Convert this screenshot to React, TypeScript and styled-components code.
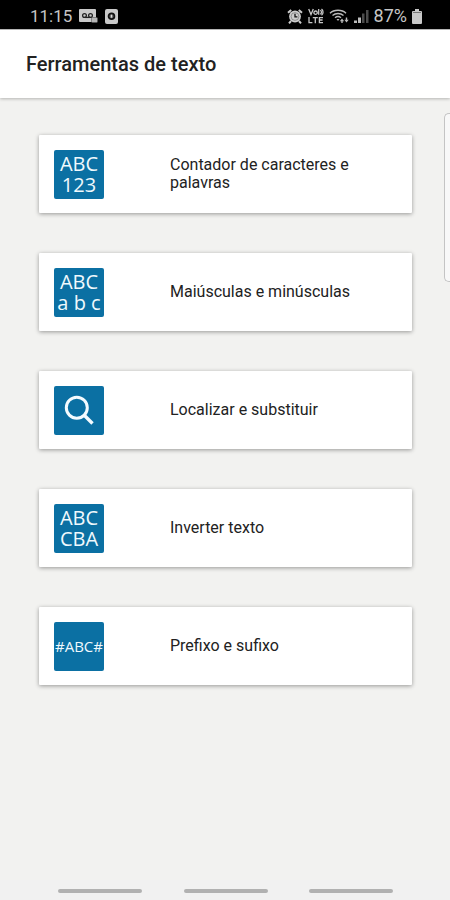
import React from "react";
import styled, { createGlobalStyle } from "styled-components";

const GlobalStyle = createGlobalStyle`
  * { box-sizing: border-box; }
  body {
    margin: 0;
    background: #f2f2f0;
    color: #222;
    font-family: Roboto, "Liberation Sans", sans-serif;
  }
`;

const Screen = styled.div`
  position: relative;
  min-height: 100vh;
  display: flex;
  flex-direction: column;
`;

const StatusBar = styled.div`
  display: flex;
  justify-content: space-between;
  align-items: center;
  height: 29px;
  padding: 3px 28px 0 30px;
  background: #000;
  color: #c6c6c6;
  line-height: 20px;
`;

const StatusGroup = styled.div<{ $gap: number; $size: number }>`
  display: flex;
  align-items: center;
  gap: ${(p) => p.$gap}px;
  font-size: ${(p) => p.$size}px;
  svg { display: block; flex: none; }
`;

const AppBar = styled.header`
  display: flex;
  align-items: center;
  height: 69px;
  padding: 0 26px;
  background: #fff;
  border-top: 1px solid #b5b5b5;
  box-shadow: 0 1px 3px rgba(0, 0, 0, 0.26);
`;

const Title = styled.h1`
  margin: 0;
  font-size: 20px;
  line-height: 24px;
  font-weight: 500;
`;

const ToolList = styled.main`
  flex: 1;
  display: flex;
  flex-direction: column;
  gap: 40px;
  padding: 37px 38px 40px 39px;
`;

const ToolCard = styled.button`
  display: grid;
  grid-template-columns: 50px 1fr;
  column-gap: 66px;
  align-items: center;
  width: 100%;
  min-height: 78px;
  padding: 14px 32px 14px 15px;
  border: 0;
  border-radius: 1px;
  background: #fff;
  box-shadow: 0 1px 4px rgba(0, 0, 0, 0.38);
  color: inherit;
  font: inherit;
  text-align: left;
  cursor: pointer;
`;

const Tile = styled.span<{ $small?: boolean }>`
  display: flex;
  flex-direction: column;
  align-items: center;
  justify-content: center;
  height: 49px;
  border-radius: 2px;
  background: #0b70a3;
  color: #f0f9fd;
  font-family: "Open Sans", "Noto Sans", sans-serif;
  font-size: ${(p) => (p.$small ? 15 : 20)}px;
  font-weight: 500;
  line-height: 21px;
  white-space: nowrap;
`;

const Label = styled.span`
  font-size: 16px;
  line-height: 18px;
`;

const EdgePanel = styled.div`
  position: absolute;
  top: 113px;
  right: 0;
  width: 6px;
  height: 169px;
  border: 1px solid #c4c4c4;
  border-right: 0;
  border-radius: 5px 0 0 5px;
  background: #f8f8f8;
`;

const NavBar = styled.nav`
  display: flex;
  justify-content: space-between;
  align-items: center;
  height: 20px;
  padding: 2px 57px 0 58px;
  background: #f1f1f1;
`;

const NavButton = styled.button`
  width: 84px;
  height: 4px;
  padding: 0;
  border: 0;
  border-radius: 2px;
  background: #b1b1b1;
`;

const VoicemailIcon = () => (
  <svg width="19" height="15" viewBox="0 0 19 15" aria-hidden="true">
    <rect x="0" y="0" width="17" height="13" rx="1" fill="#c9c9c9" />
    <g fill="none" stroke="#222" strokeWidth="1.3">
      <circle cx="5.5" cy="6.5" r="1.9" />
      <circle cx="11.5" cy="6.5" r="1.9" />
      <path d="M5.5 8.4h6" />
    </g>
    <rect x="12.5" y="8.5" width="6" height="5" rx="1" fill="#b5b5b5" stroke="#555" strokeWidth=".6" />
  </svg>
);

const DeviceIcon = () => (
  <svg width="13" height="15" viewBox="0 0 13 15" aria-hidden="true">
    <rect width="13" height="15" rx="2" fill="#c9c9c9" />
    <circle cx="6.5" cy="7.2" r="2.9" fill="#777" stroke="#111" strokeWidth="1.8" />
    <path d="M6.5 5.8v2.8" stroke="#ddd" />
  </svg>
);

const AlarmIcon = () => (
  <svg width="16" height="15" viewBox="0 0 16 15" aria-hidden="true">
    <circle cx="8" cy="7.5" r="5.9" fill="#ccc" />
    <path d="M1 3.8 4.2 1M15 3.8 11.8 1M4 12l-2 2.3M12 12l2 2.3" stroke="#ccc" strokeWidth="2" />
    <circle cx="8" cy="7.5" r="3.9" fill="none" stroke="#777" strokeWidth=".7" />
    <path d="M8 4.8v3h2.4" fill="none" stroke="#111" strokeWidth="1.3" />
  </svg>
);

const VolteIcon = () => (
  <svg width="16" height="16" viewBox="0 0 16 16" aria-hidden="true">
    <g fill="none" stroke="#c6c6c6" strokeWidth="1.3">
      <path d="M.7 1 3 6.5 5.3 1" />
      <circle cx="7.6" cy="4.7" r="1.7" />
      <path d="M10.7 1v5.8M12.3 2.3a2.3 2.3 0 0 1 0 4M13.5 1a4 4 0 0 1 0 6.3" />
      <path d="M1 9v5.6h3.4M4.8 9.6h5M7.3 9.6v5.6M15 9.6h-3.6v5H15M11.4 12h3.2" />
    </g>
  </svg>
);

const WifiIcon = () => (
  <svg width="20" height="15" viewBox="0 0 20 15" aria-hidden="true">
    <g fill="none" stroke="#bbb" strokeWidth="1.4">
      <path d="M1 4.2C5 .2 13 .2 17 4.2" />
      <path d="M3.5 6.5c3-2.7 8-2.7 11 0" />
      <path d="M6 8.7c1.8-1.5 4.2-1.5 6 0" />
    </g>
    <path d="M7.5 10h3L9 12z" fill="#bbb" />
    <path d="M10.8 12.3 13 9.5l2.2 2.8h-1.5V14h-1.4v-1.7zM15.4 10.7h1.4V8.5h1.4v2.2h1.5l-2.2 2.9z" fill="#bbb" />
  </svg>
);

const SignalIcon = () => (
  <svg width="15" height="14" viewBox="0 0 15 14" aria-hidden="true">
    <path d="M0 11.5h3V14H0zM4 8.5h3V14H4z" fill="#bcbcbc" />
    <path d="M8 4.5h2.5V14H8zM12 1h2.5v13H12z" fill="#4c4c4c" />
  </svg>
);

const BatteryIcon = () => (
  <svg width="10" height="15" viewBox="0 0 10 15" aria-hidden="true">
    <path d="M3 0h4v2h2a1 1 0 0 1 1 1v11a1 1 0 0 1-1 1H1a1 1 0 0 1-1-1V3a1 1 0 0 1 1-1h2z" fill="#c9c9c9" />
    <path d="M1 3h8v1H1z" fill="#777" />
  </svg>
);

const SearchIcon = () => (
  <svg width="30" height="30" viewBox="0 0 30 30" aria-hidden="true">
    <circle cx="12.8" cy="12.7" r="10.5" fill="none" stroke="#f4fbff" strokeWidth="3" />
    <path d="m20 20 8.5 8.5" stroke="#f4fbff" strokeWidth="3.4" />
  </svg>
);

const tools: { label: string; lines?: string[]; small?: boolean }[] = [
  { label: "Contador de caracteres e palavras", lines: ["ABC", "123"] },
  { label: "Maiúsculas e minúsculas", lines: ["ABC", "a b c"] },
  { label: "Localizar e substituir" },
  { label: "Inverter texto", lines: ["ABC", "CBA"] },
  { label: "Prefixo e sufixo", lines: ["#ABC#"], small: true },
];

export default function App() {
  return (
    <Screen>
      <GlobalStyle />
      <StatusBar>
        <StatusGroup $gap={7} $size={17}>
          <span>11:15</span>
          <VoicemailIcon />
          <DeviceIcon />
        </StatusGroup>
        <StatusGroup $gap={5} $size={18}>
          <AlarmIcon />
          <VolteIcon />
          <WifiIcon />
          <SignalIcon />
          <span>87%</span>
          <BatteryIcon />
        </StatusGroup>
      </StatusBar>
      <AppBar>
        <Title>Ferramentas de texto</Title>
      </AppBar>
      <ToolList>
        {tools.map((tool) => (
          <ToolCard key={tool.label} type="button">
            <Tile $small={tool.small} aria-hidden="true">
              {tool.lines ? tool.lines.map((line) => <span key={line}>{line}</span>) : <SearchIcon />}
            </Tile>
            <Label>{tool.label}</Label>
          </ToolCard>
        ))}
      </ToolList>
      <EdgePanel />
      <NavBar>
        <NavButton type="button" aria-label="Recentes" />
        <NavButton type="button" aria-label="Início" />
        <NavButton type="button" aria-label="Voltar" />
      </NavBar>
    </Screen>
  );
}
